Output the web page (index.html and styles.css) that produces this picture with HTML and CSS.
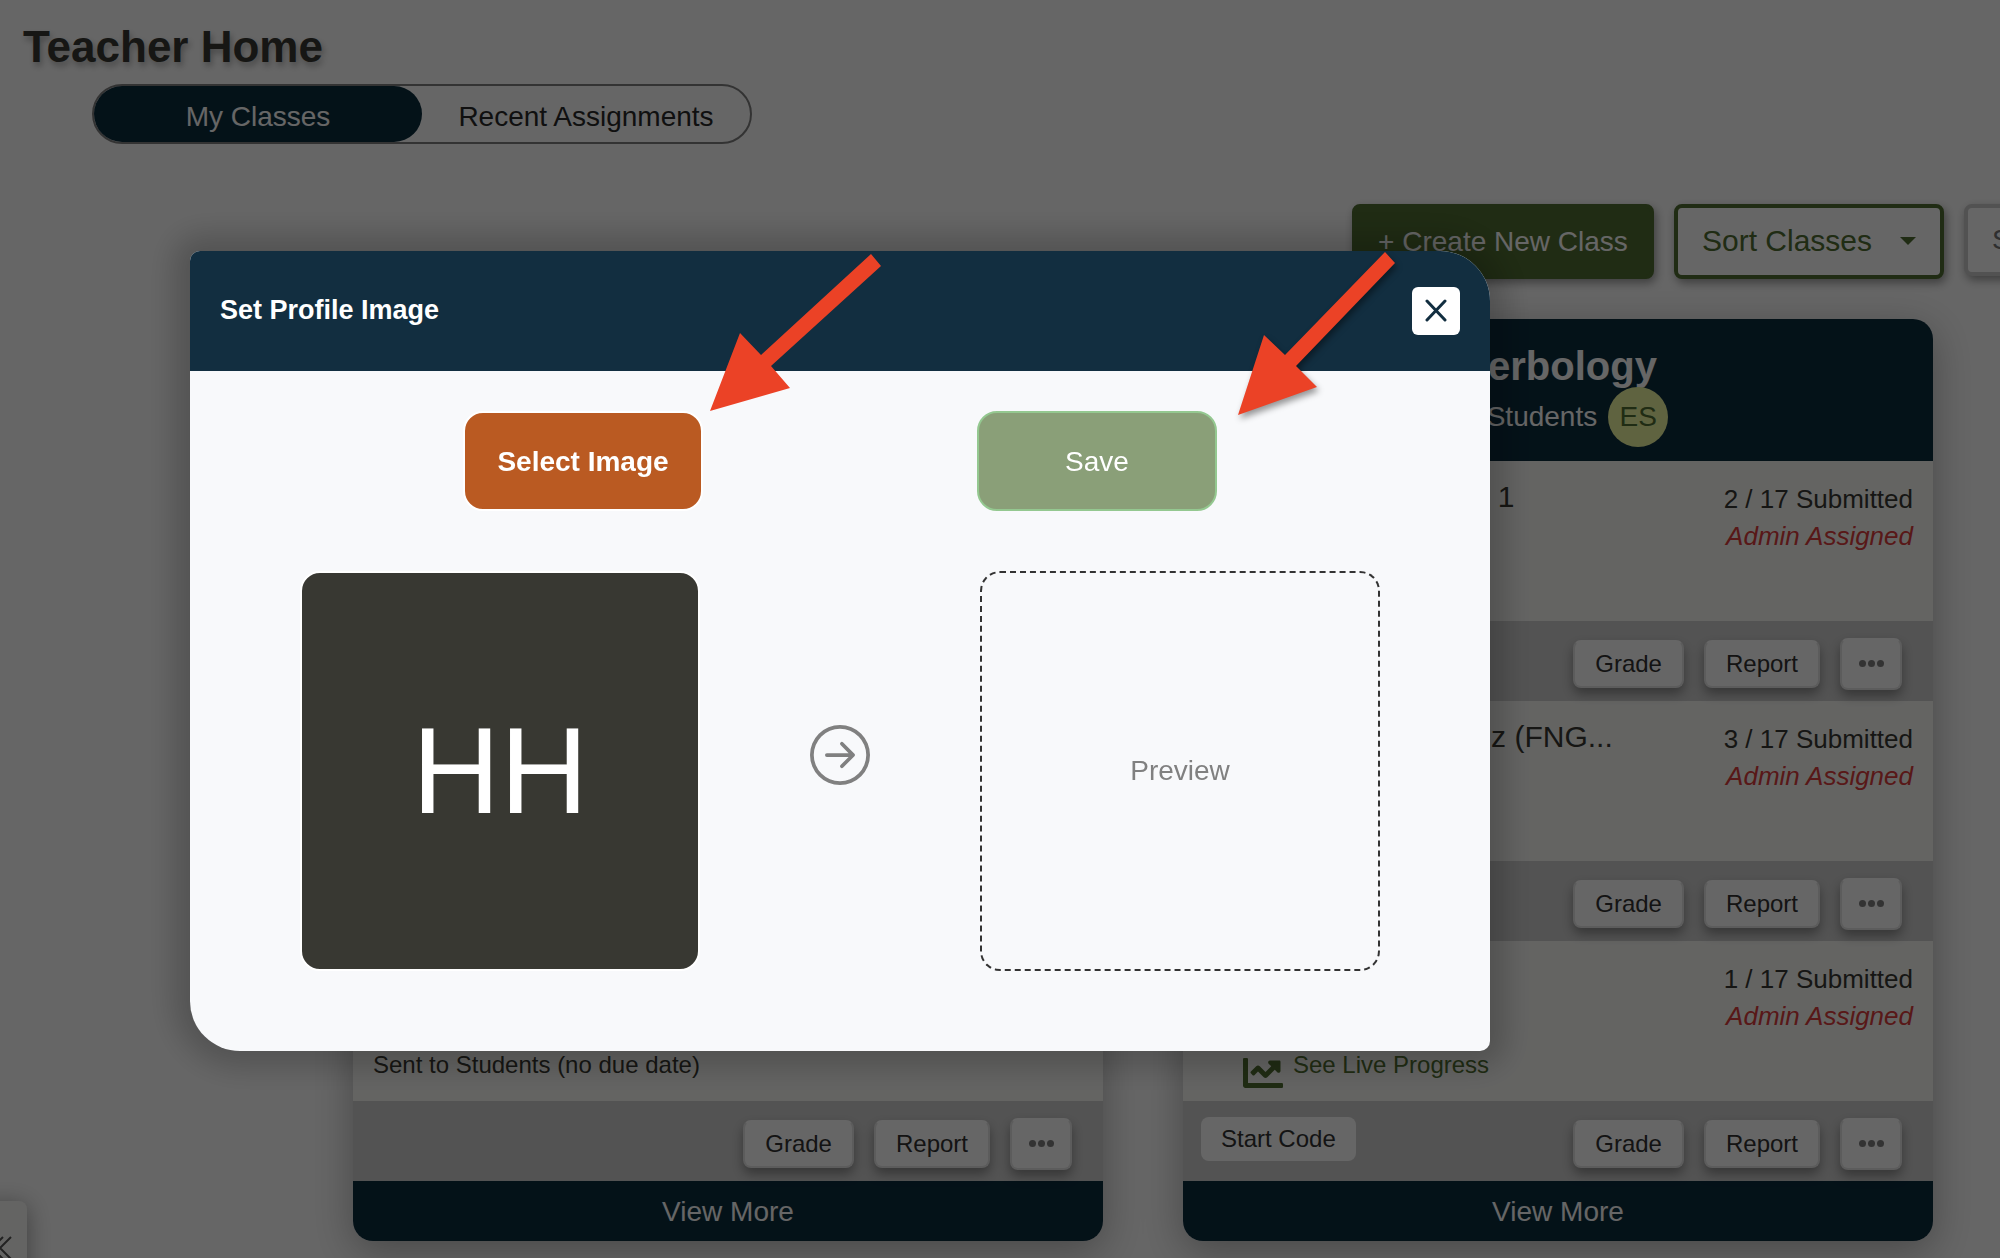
FILE: index.html
```html
<!DOCTYPE html>
<html lang="en">
  <head>
    <meta charset="UTF-8">
    <title>Teacher Home</title>
    <link rel="stylesheet" href="styles.css">
  </head>
  <body>
    <main class="page">
      <h1>Teacher Home</h1>
      <nav class="tabs">
        <button class="tab active">My Classes</button>
        <button class="tab">Recent Assignments</button>
      </nav>

      <div class="toolbar">
        <button class="create-btn">+ Create New Class</button>
        <button class="sort-btn">Sort Classes <span class="caret"></span></button>
        <input class="search" type="search" placeholder="Search Classes" aria-label="Search Classes">
      </div>

      <div class="classes">
        <section class="card">
          <header class="card-header">
            <h2>Potions</h2>
            <div class="students">17 Students</div>
          </header>
          <div class="row"></div>
          <div class="row-footer"></div>
          <div class="row"></div>
          <div class="row-footer"></div>
          <div class="row">
            <p class="note">Sent to Students (no due date)</p>
          </div>
          <div class="row-footer">
            <button class="btn">Grade</button>
            <button class="btn">Report</button>
            <button class="btn more" aria-label="More"><i></i><i></i><i></i></button>
          </div>
          <button class="view-more">View More</button>
        </section>

        <section class="card">
          <header class="card-header">
            <h2>Herbology</h2>
            <div class="students">17 Students <span class="initials">ES</span></div>
          </header>
          <div class="row">
            <h3>Seeds Assignment 1</h3>
            <div class="status">2 / 17 Submitted<em>Admin Assigned</em></div>
          </div>
          <div class="row-footer">
            <button class="btn">Grade</button>
            <button class="btn">Report</button>
            <button class="btn more" aria-label="More"><i></i><i></i><i></i></button>
          </div>
          <div class="row">
            <h3>Magical Plants Quiz (FNG...</h3>
            <div class="status">3 / 17 Submitted<em>Admin Assigned</em></div>
          </div>
          <div class="row-footer">
            <button class="btn">Grade</button>
            <button class="btn">Report</button>
            <button class="btn more" aria-label="More"><i></i><i></i><i></i></button>
          </div>
          <div class="row">
            <a class="note live" href="#">
              <svg width="40" height="30" viewBox="0 64 512 384" fill="currentColor"><path d="M496 384H64V80c0-8.84-7.16-16-16-16H16C7.16 64 0 71.16 0 80v336c0 17.67 14.33 32 32 32h464c8.84 0 16-7.16 16-16v-32c0-8.84-7.16-16-16-16zM464 96H345.940c-21.380 0-32.090 25.850-16.970 40.970l32.400 32.400L288 242.750l-73.370-73.370c-12.500-12.500-32.760-12.500-45.250 0l-68.690 68.690c-6.250 6.250-6.250 16.380 0 22.630l22.620 22.620c6.250 6.250 16.380 6.250 22.630 0L192 237.250l73.370 73.370c12.500 12.500 32.760 12.500 45.250 0l96-96 32.400 32.400c15.120 15.120 40.970 4.410 40.970-16.970V112c.010-8.840-7.150-16-15.990-16z"/></svg>
              See Live Progress
            </a>
            <div class="status">1 / 17 Submitted<em>Admin Assigned</em></div>
          </div>
          <div class="row-footer">
            <button class="btn start">Start Code</button>
            <button class="btn">Grade</button>
            <button class="btn">Report</button>
            <button class="btn more" aria-label="More"><i></i><i></i><i></i></button>
          </div>
          <button class="view-more">View More</button>
        </section>
      </div>
    </main>

    <button class="drawer" aria-label="Open menu">
      <svg width="24" height="24" viewBox="0 0 24 24" fill="none" stroke="currentColor" stroke-width="2"><path d="M11 1 0 12l11 11M19 1 8 12l11 11"/></svg>
    </button>

    <div class="overlay">
      <div class="modal" role="dialog" aria-labelledby="modal-title">
        <header class="modal-header">
          <h2 id="modal-title">Set Profile Image</h2>
          <button class="close" aria-label="Close">
            <svg width="24" height="24" viewBox="0 0 24 24" fill="none" stroke="currentColor" stroke-width="3" stroke-linecap="round"><path d="M3 2l18 19M21 2 3 21"/></svg>
          </button>
        </header>
        <div class="modal-body">
          <div class="actions">
            <button class="select-btn">Select Image</button>
            <button class="save-btn">Save</button>
          </div>
          <div class="images">
            <div class="avatar">HH</div>
            <svg class="arrow" width="60" height="60" viewBox="0 0 16 16" fill="currentColor"><path fill-rule="evenodd" d="M1 8a7 7 0 1 0 14 0A7 7 0 0 0 1 8m15 0A8 8 0 1 1 0 8a8 8 0 0 1 16 0M4.500 7.500a.5.5 0 0 0 0 1h5.793l-2.147 2.146a.5.5 0 0 0 .708.708l3-3a.5.5 0 0 0 0-.708l-3-3a.5.5 0 1 0-.708.708L10.293 7.500z"/></svg>
            <div class="preview">Preview</div>
          </div>
        </div>
        <svg class="pointers" width="1300" height="200" viewBox="0 0 1300 200">
          <path d="M520 160 550 82 571 104 681 3 691 15 581 115 600 137z"/>
          <path class="raised" d="M1048 164 1074 84 1095 104 1195 1 1205 12 1106 115 1127 136z"/>
        </svg>
      </div>
    </div>
  </body>
</html>
```
FILE: styles.css
```css
* {
  box-sizing: border-box;
}

body {
  margin: 0;
  height: 100vh;
  overflow: hidden;
  font-family: "Liberation Sans", Arial, sans-serif;
  font-size: 28px;
  color: #383832;
  background: #fff;
}

h1, h2, h3, p {
  margin: 0;
}

button, input {
  font-family: inherit;
  font-size: 28px;
  cursor: pointer;
}

.page {
  padding-top: 21px;
  overflow: hidden;
}

h1 {
  margin-left: 23px;
  font-size: 44px;
  line-height: 52px;
  text-shadow: 2px 4px 6px rgba(0, 0, 0, 0.3);
}

.tabs {
  display: flex;
  width: 33%;
  height: 60px;
  margin: 11px 0 60px 92px;
  border: 2px solid #808080;
  border-radius: 30px;
}

.tab {
  flex: 1;
  padding: 6px 0 0;
  border: none;
  border-radius: 28px;
  background: none;
  color: #2a2a2a;
  white-space: nowrap;
}

.tab.active {
  background: #0c2d3e;
  color: #fff;
}

/* toolbar */
.toolbar {
  display: flex;
  justify-content: flex-end;
  gap: 20px;
  height: 75px;
  margin: 0 -264px 40px 0;
}

.create-btn, .sort-btn, .search {
  border: 4px solid #506e32;
  border-radius: 8px;
  box-shadow: 2px 4px 10px rgba(0, 0, 0, 0.4);
}

.create-btn {
  width: 302px;
  background: #506e32;
  color: #fff;
}

.sort-btn {
  display: flex;
  align-items: center;
  justify-content: space-between;
  width: 270px;
  padding: 0 24px 2px;
  background: #fff;
  color: #506e32;
  font-size: 30px;
}

.caret {
  border: 8px solid transparent;
  border-top-color: #506e32;
  border-bottom: none;
}

.search {
  width: 300px;
  height: 72px;
  padding: 0 24px;
  border-color: #ccc;
  background: #fff;
}

/* class cards */
.classes {
  display: grid;
  grid-template-columns: 1fr 1fr;
  gap: 80px;
  padding: 0 67px 60px 353px;
}

.card {
  border-radius: 20px;
  overflow: hidden;
  box-shadow: 0 10px 40px rgba(0, 0, 0, 0.3);
}

.card-header {
  height: 142px;
  padding-top: 23px;
  background: #0c2d3e;
  color: #fff;
  text-align: center;
}

.card-header h2 {
  font-size: 40px;
  line-height: 48px;
}

.students {
  display: flex;
  align-items: center;
  justify-content: center;
  gap: 11px;
  height: 54px;
}

.initials {
  width: 60px;
  border-radius: 50%;
  background: #eef7a0;
  color: #506e32;
  line-height: 60px;
}

.row {
  display: flex;
  justify-content: space-between;
  height: 160px;
  padding: 20px 20px 18px;
  background: #fafaf6;
}

.row h3 {
  padding-left: 38px;
  font-size: 30px;
  font-weight: normal;
  line-height: 32px;
}

.status {
  font-size: 26px;
  line-height: 37px;
  text-align: right;
}

.status em {
  display: block;
  color: #dc3c3c;
}

.note {
  align-self: flex-end;
  font-size: 24px;
  line-height: 36px;
}

.live {
  display: flex;
  gap: 10px;
  height: 36px;
  padding-left: 40px;
  color: #506e32;
  text-decoration: none;
}

.live svg {
  margin-top: 11px;
}

.row-footer {
  display: flex;
  align-items: center;
  justify-content: flex-end;
  gap: 20px;
  height: 80px;
  padding: 5px 31px 0 18px;
  background: #d0d0d0;
}

.btn {
  height: 48px;
  padding: 0 20px;
  border: 2px solid #e6e6e6;
  border-top-color: #fff;
  border-radius: 8px;
  background: #fff;
  color: #333;
  font-size: 24px;
  box-shadow: 0 6px 12px rgba(0, 0, 0, 0.35);
}

.more {
  display: flex;
  align-items: center;
  justify-content: center;
  gap: 2px;
  width: 62px;
  height: 52px;
  padding: 0;
}

.more i {
  width: 7px;
  height: 7px;
  border-radius: 50%;
  background: #808080;
}

.start {
  align-self: flex-start;
  height: 44px;
  margin: 11px auto 0 0;
  border: none;
  box-shadow: none;
}

.view-more {
  display: block;
  width: 100%;
  height: 60px;
  padding-top: 2px;
  border: none;
  background: #0c2d3e;
  color: #fff;
}

.drawer {
  position: fixed;
  left: -20px;
  bottom: -43px;
  width: 47px;
  height: 100px;
  padding: 0;
  border: none;
  border-radius: 8px;
  background: #fafaf8;
  color: #555;
  box-shadow: 0 4px 24px rgba(0, 0, 0, 0.4);
}

/* modal */
.overlay {
  position: fixed;
  inset: 0;
  padding: 251px 0 0 190px;
  background: rgba(0, 0, 0, 0.6);
}

.modal {
  position: relative;
  width: 1300px;
  max-width: 90%;
  border-radius: 10px 50px 10px 50px;
  background: #f8f9fb;
  box-shadow: 0 0 30px 16px rgba(0, 0, 0, 0.2);
}

.modal-header {
  display: flex;
  align-items: center;
  justify-content: space-between;
  height: 120px;
  padding: 0 30px 1px;
  border-radius: 10px 50px 0 0;
  background: #122e40;
  color: #fff;
}

.modal-header h2 {
  font-size: 27px;
}

.close {
  display: flex;
  align-items: center;
  justify-content: center;
  width: 48px;
  height: 48px;
  padding: 0;
  border: none;
  border-radius: 6px;
  background: #fff;
  color: #122e40;
}

.modal-body {
  padding: 40px 110px 80px;
}

.actions {
  display: flex;
  justify-content: center;
  gap: 274px;
  margin-bottom: 60px;
}

.select-btn, .save-btn {
  width: 240px;
  height: 100px;
  padding-top: 2px;
  border: 2px solid #fff;
  border-radius: 20px;
  background: #ba5a22;
  color: #fff;
}

.select-btn {
  font-weight: bold;
}

.save-btn {
  border-color: #94c890;
  background: #8a9f78;
}

.images {
  display: flex;
  justify-content: space-between;
}

.avatar, .preview {
  display: flex;
  align-items: center;
  justify-content: center;
  width: 400px;
  height: 400px;
  border: 2px solid #fff;
  border-radius: 20px;
}

.avatar {
  background: #383832;
  color: #fff;
  font-size: 122px;
}

.preview {
  border: 2px dashed #333;
  color: #808080;
}

.arrow {
  margin-top: 154px;
  color: #808080;
}

.pointers {
  position: absolute;
  left: 0;
  top: 0;
  overflow: visible;
  fill: #eb4226;
  pointer-events: none;
}

.raised {
  filter: drop-shadow(2px 4px 3px rgba(0, 0, 0, 0.4));
}
```
